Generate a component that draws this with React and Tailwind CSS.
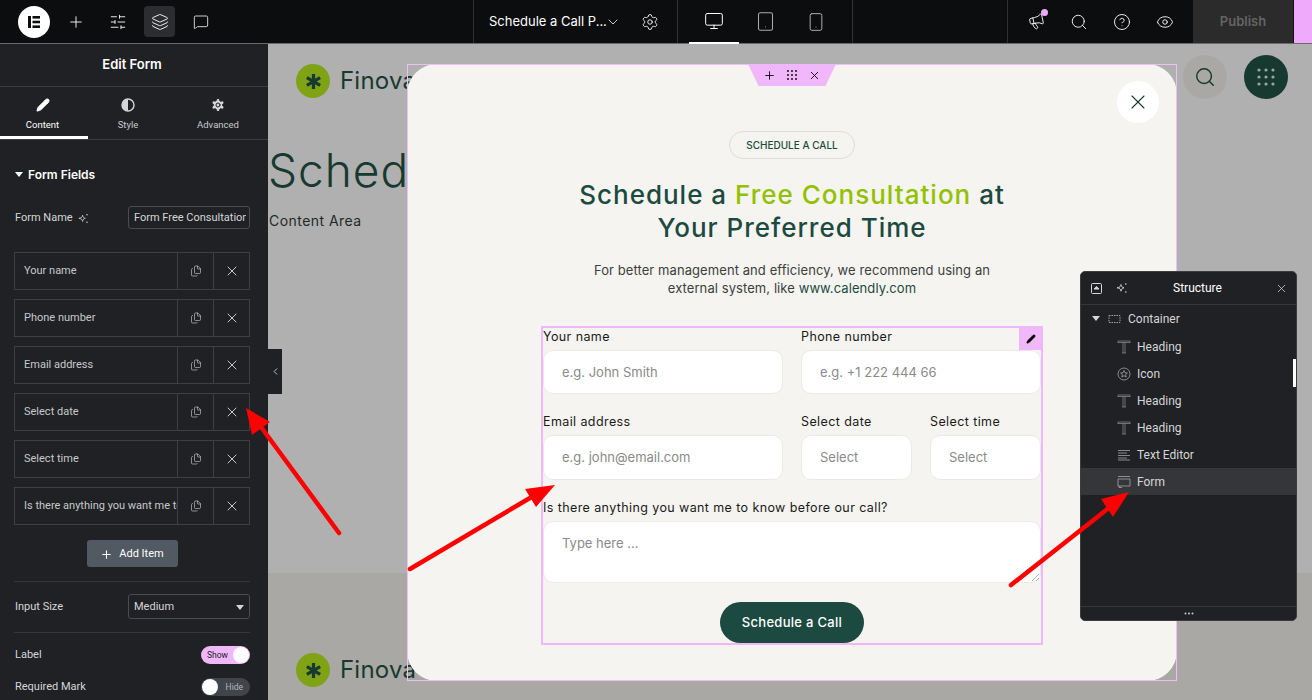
import React from "react";
import { Plus, SlidersHorizontal, Layers, MessageSquare, ChevronDown, Settings, Monitor, Tablet, Smartphone, Megaphone, Search, CircleHelp, Eye, X, Pencil, Files, ChevronLeft } from "lucide-react";

const Asterisk = ({ size = 20 }) => (
  <svg width={size} height={size} viewBox="0 0 20 20" fill="none" stroke="#17392f" strokeWidth="3.4">
    <path d="M10 2v16M3 6l14 8M17 6L3 14" />
  </svg>
);

const Spark = ({ size = 11, color = "#d5d6d8" }) => (
  <svg width={size} height={size} viewBox="0 0 12 12" fill="none" stroke={color} strokeWidth="0.9">
    <path d="M5 2.500C5.400 4.600 6 5.300 8 5.800 6 6.300 5.400 7 5 9.200 4.600 7 4 6.300 1 5.800 4 5.300 4.600 4.600 5 2.500z" />
    <circle cx="9.800" cy="2" r="0.8" fill={color} stroke="none" />
    <circle cx="9.800" cy="10" r="0.8" fill={color} stroke="none" />
  </svg>
);

const Dots = ({ n = 3, gap = 6, r = 1, color = "#fff", size = 16 }) => {
  const c = [];
  const s = (size - (n - 1) * gap) / 2;
  for (let i = 0; i < n; i++) for (let j = 0; j < n; j++) c.push(<circle key={i + "-" + j} cx={s + i * gap} cy={s + j * gap} r={r} fill={color} />);
  return <svg width={size} height={size}>{c}</svg>;
};

const ElementorLogo = () => (
  <div className="w-8 h-8 rounded-full bg-white flex items-center justify-center">
    <svg width="16" height="16" viewBox="0 0 16 16" fill="#0c0d0e">
      <rect x="2" y="2" width="3" height="12" />
      <rect x="6.5" y="2" width="7.5" height="2.6" />
      <rect x="6.5" y="6.7" width="7.5" height="2.6" />
      <rect x="6.5" y="11.4" width="7.5" height="2.6" />
    </svg>
  </div>
);

const TopBar = () => (
  <div className="h-[44px] shrink-0 bg-[#0c0d0e] border-b border-[#6b6b6b] flex text-white font-['Inter',sans-serif]">
    <div className="w-[473px] shrink-0 flex items-center pl-[18px]">
      <ElementorLogo />
      <Plus size={18} strokeWidth={1.2} className="ml-[17px]" />
      <SlidersHorizontal size={18} strokeWidth={1.2} className="ml-[24px]" />
      <div className="ml-[17px] w-[31px] h-[31px] rounded bg-[#2c2d30] flex items-center justify-center"><Layers size={18} strokeWidth={1.2} /></div>
      <MessageSquare size={16} strokeWidth={1.2} className="ml-[18px]" />
    </div>
    <div className="w-[204px] shrink-0 border-l border-[#303133] flex items-center pl-[15px]">
      <span className="text-[13px] w-[114px] whitespace-nowrap">Schedule a Call P...</span>
      <ChevronDown size={16} strokeWidth={1.2} className="ml-[2px]" />
      <Settings size={18} strokeWidth={1.2} className="ml-[20px]" />
    </div>
    <div className="w-[176px] shrink-0 border-x border-[#303133] flex pl-[11px]">
      <div className="w-[50px] h-[44px] border-b-2 border-white flex items-center justify-center"><Monitor size={20} strokeWidth={1.2} /></div>
      <div className="w-[52px] flex items-center justify-center text-[#a9aaac]"><Tablet size={21} strokeWidth={1.2} /></div>
      <div className="w-[50px] flex items-center justify-center text-[#a9aaac]"><Smartphone size={20} strokeWidth={1.2} /></div>
    </div>
    <div className="w-[154px] shrink-0" />
    <div className="w-[186px] shrink-0 border-l border-[#303133] flex items-center pl-[20px] gap-[25px]">
      <div className="relative">
        <Megaphone size={17} strokeWidth={1.2} className="-rotate-12" />
        <div className="absolute -top-[4px] -right-[3px] w-[7px] h-[7px] rounded-full bg-[#eeaafc]" />
      </div>
      <Search size={18} strokeWidth={1.2} />
      <CircleHelp size={18} strokeWidth={1.2} />
      <Eye size={18} strokeWidth={1.2} />
    </div>
    <div className="w-[100px] shrink-0 bg-[#2b2b2b] flex items-center justify-center text-[13px] font-semibold text-[#646464]">Publish</div>
    <div className="flex-1 bg-[#f0aafc] border-l border-[#111]" />
  </div>
);

const Row = ({ label }) => (
  <div className="h-[38px] flex border border-[#3d3f43] text-[11px] text-[#c8c9cb]">
    <div className="w-[162px] shrink-0 pl-[9px] pt-[1px] flex items-center overflow-hidden whitespace-nowrap">{label}</div>
    <div className="w-[36px] shrink-0 border-l border-[#3d3f43] flex items-center justify-center"><Files size={12} strokeWidth={1.3} /></div>
    <div className="flex-1 border-l border-[#3d3f43] flex items-center justify-center"><X size={16} strokeWidth={1.5} /></div>
  </div>
);

const Tab = ({ active, label, w, children }) => (
  <div className={"flex flex-col items-center pt-[9px] text-[9.5px] " + w + " " + (active ? "border-b-[3px] border-white text-white pr-[3px]" : "text-[#c8c9cb]")}>
    <div className="h-[18px] flex items-center">{children}</div>
    <div className="mt-[4px]">{label}</div>
  </div>
);

const Toggle = ({ on }) => on ? (
  <div className="w-[49px] h-[18px] rounded-full bg-[#f0b8fb] flex items-center justify-between text-[8.5px] text-[#222] pl-[6px]">
    <span>Show</span><div className="w-[16px] h-[16px] rounded-full bg-white mr-[1px]" />
  </div>
) : (
  <div className="w-[49px] h-[18px] rounded-full bg-[#40444b] flex items-center justify-between text-[8.5px] text-[#b5b7ba] pr-[7px]">
    <div className="w-[16px] h-[16px] rounded-full bg-white ml-[1px]" /><span>Hide</span>
  </div>
);

const LeftPanel = () => (
  <div className="w-[268px] h-full shrink-0 bg-[#1f2124] text-[#d5d6d8] font-['Roboto',sans-serif] overflow-hidden">
    <div className="h-[43px] border-b border-[#3a3c40] flex items-center justify-center pr-[4px] text-[13px] font-semibold text-white font-['Inter',sans-serif]">Edit Form</div>
    <div className="h-[53px] border-b border-[#3a3c40] flex">
      <Tab active w="w-[88px]" label="Content"><Pencil size={14} fill="#fff" className="text-white" /></Tab>
      <Tab w="w-[80px]" label="Style">
        <svg width="14" height="14" viewBox="0 0 14 14"><circle cx="7" cy="7" r="6" fill="none" stroke="#d5d6d8" strokeWidth="1.4" /><path d="M7 1a6 6 0 0 0 0 12z" fill="#d5d6d8" /></svg>
      </Tab>
      <Tab w="w-[100px]" label="Advanced"><Settings size={16} fill="#d5d6d8" strokeWidth={1.5} className="text-[#1f2124]" /></Tab>
    </div>
    <div className="pl-[14px] pr-[18px]">
      <div className="h-[66px] flex items-center pt-[3px] pl-[1px] text-[12px] font-semibold text-white font-['Inter',sans-serif]">
        <svg width="8" height="5" viewBox="0 0 8 5" className="mr-[5px]"><path d="M0 0h8L4 5z" fill="#fff" /></svg>Form Fields
      </div>
      <div className="flex items-center justify-between h-[23px] text-[11px]">
        <div className="flex items-center gap-[5px] pl-[1px] pt-[1px]">Form Name <Spark /></div>
        <div className="w-[122px] h-[23px] border border-[#4a4c50] rounded-[3px] pl-[5px] pt-[1px] flex items-center">
          <div className="w-[112px] overflow-hidden whitespace-nowrap">Form Free Consultation</div>
        </div>
      </div>
      <div className="mt-[23px] flex flex-col gap-[9px]">
        <Row label="Your name" />
        <Row label="Phone number" />
        <Row label="Email address" />
        <Row label="Select date" />
        <Row label="Select time" />
        <Row label="Is there anything you want me to know before our call?" />
      </div>
      <div className="mt-[15px] flex justify-center">
        <div className="w-[91px] h-[27px] rounded-[3px] bg-[#515962] text-white text-[11px] pt-[1px] flex items-center justify-center gap-[6px]"><Plus size={13} strokeWidth={2} />Add Item</div>
      </div>
      <div className="mt-[14px] border-t border-[#35373b]" />
      <div className="mt-[12px] flex items-center justify-between text-[11px] pl-[1px]">
        <span className="pt-[1px]">Input Size</span>
        <div className="w-[122px] h-[25px] border border-[#4a4c50] rounded-[3px] px-[5px] pt-[1px] flex items-center justify-between">Medium
          <svg width="8" height="5" viewBox="0 0 8 5"><path d="M0 0h8L4 5z" fill="#d5d6d8" /></svg>
        </div>
      </div>
      <div className="mt-[13px] border-t border-[#35373b]" />
      <div className="mt-[13px] flex items-center justify-between text-[11px] pl-[1px]"><span className="pt-[1px]">Label</span> <Toggle on /></div>
      <div className="mt-[14px] flex items-center justify-between text-[11px] pl-[1px]"><span className="pt-[1px]">Required Mark</span> <Toggle /></div>
    </div>
  </div>
);

const Brand = () => (
  <div className="flex items-center gap-[10px]">
    <div className="w-[34px] h-[34px] rounded-full bg-[#7fa315] flex items-center justify-center"><Asterisk size={19} /></div>
    <span className="text-[24px] text-[#17392f] font-['Inter',sans-serif] tracking-[0.2px]">Finova</span>
  </div>
);

const Input = ({ ph, className = "", h = "h-[44px]" }) => (
  <div className={"bg-white border border-[#ebeae6] rounded-[10px] pl-[18px] flex items-center text-[13px] text-[#8a8a8a] " + h + " " + className}>{ph}</div>
);

const Label = ({ children }) => <div className="text-[12.5px] text-[#1a1a1a] h-[22px] leading-[17px] tracking-[0.4px] whitespace-nowrap">{children}</div>;

const Modal = () => (
  <div className="absolute left-[139px] top-[20px] w-[770px] h-[617px] rounded-[30px] bg-[#f5f4f0] flex flex-col items-center font-['Inter',sans-serif]">
    <div className="absolute inset-0 border border-[#ecc0f5] pointer-events-none" />
    <div className="absolute left-[341px] top-0 w-[88px] h-[22px] bg-[#f0b8fb] [clip-path:polygon(0_0,100%_0,88%_100%,12%_100%)] flex items-center justify-center gap-[10px] text-black">
      <Plus size={13} strokeWidth={1.6} /><Dots n={3} gap={4} r={0.9} color="#000" size={12} /><X size={13} strokeWidth={1.6} />
    </div>
    <div className="absolute right-[18px] top-[17px] w-[42px] h-[42px] rounded-full bg-white flex items-center justify-center text-[#17392f]"><X size={24} strokeWidth={1.1} /></div>
    <div className="mt-[67px] h-[28px] w-[126px] rounded-full border border-[#dedcd6] flex items-center justify-center text-[10px] font-medium text-[#1c4a40] whitespace-nowrap">SCHEDULE A CALL</div>
    <div className="mt-[19px] text-[26px] leading-[33px] font-medium text-[#1c4a40] text-center tracking-[1px]">
      <div>Schedule a <span className="text-[#93c100]">Free Consultation</span> at</div>
      <div>Your Preferred Time</div>
    </div>
    <div className="mt-[17px] text-[13px] leading-[18px] text-[#3c3f3d] text-center tracking-[0.08px]">
      <div>For better management and efficiency, we recommend using an</div>
      <div>external system, like <span className="text-[#1c4a40]">www.calendly.com</span></div>
    </div>
    <div className="relative mt-[29px] w-[502px] h-[319px] border-2 border-[#f0b8fb] flex flex-col">
      <div className="absolute right-[-1px] top-[-1px] w-[23px] h-[23px] bg-[#f0b8fb] flex items-center justify-center">
        <Pencil size={10} fill="#000" strokeWidth={1.5} className="text-black" />
      </div>
      <div className="flex gap-[18px]">
        <div className="w-[240px]"><Label>Your name</Label><Input ph="e.g. John Smith" className="pt-[1px]" /></div>
        <div className="w-[240px]"><Label>Phone number</Label><Input ph="e.g. +1 222 444 66" className="pt-[1px]" /></div>
      </div>
      <div className="flex gap-[18px] mt-[19px]">
        <div className="w-[240px]"><Label>Email address</Label><Input ph="e.g. john@email.com" h="h-[45px]" /></div>
        <div className="w-[111px]"><Label>Select date</Label><Input ph="Select" h="h-[45px]" /></div>
        <div className="w-[111px]"><Label>Select time</Label><Input ph="Select" h="h-[45px]" /></div>
      </div>
      <div className="mt-[19px]">
        <Label>Is there anything you want me to know before our call?</Label>
        <div className="relative h-[62px] w-[498px] bg-white border border-[#ebeae6] rounded-[10px] pl-[18px] pt-[12px] text-[13px] leading-[18px] text-[#8a8a8a]">
          Type here ...
          <svg width="8" height="8" viewBox="0 0 8 8" className="absolute right-[1px] bottom-[1px]" stroke="#999" strokeWidth="0.8"><path d="M1 8l7-7M5 8l3-3" /></svg>
        </div>
      </div>
      <div className="mt-[19px] self-center w-[144px] h-[42px] rounded-full bg-[#1c4a40] text-white text-[13px] tracking-[0.3px] font-medium flex items-center justify-center">Schedule a Call</div>
    </div>
  </div>
);

const T = () => <svg width="14" height="14" viewBox="0 0 14 14" fill="none" stroke="#8f9093" strokeWidth="0.7"><path d="M1 3V1h12v2M1 2.500h12M6 2.500v10.500M8 2.500v10.500M5 13h4" /></svg>;
const SRow = ({ icon, label, active }) => (
  <div className={"h-[27px] pl-[36px] flex items-center gap-[6px] text-[12px] text-[#d5d6d8] " + (active ? "bg-[#35363a]" : "")}>
    <div className="w-[14px] flex justify-center">{icon}</div>{label}
  </div>
);

const Structure = () => (
  <div className="absolute left-[812px] top-[227px] w-[217px] h-[350px] rounded-[5px] bg-[#1f2124] border border-[#3a3c40] flex flex-col text-[#d5d6d8] font-['Roboto',sans-serif] overflow-hidden">
    <div className="relative h-[33px] shrink-0 border-b border-[#35373b] flex items-center px-[9px] gap-[13px]">
      <svg width="13" height="13" viewBox="0 0 13 13" fill="none" stroke="#d5d6d8"><rect x="1.5" y="1.5" width="10" height="10" rx="1" /><path d="M4 7l2.500-2.500L9 7z" fill="#d5d6d8" /></svg>
      <Spark size={12} />
      <span className="absolute left-[18px] right-0 top-[7px] text-center text-[12px] text-white">Structure</span>
      <X size={13} strokeWidth={1.4} className="absolute right-[8px]" />
    </div>
    <div className="relative flex-1 pt-[1px]">
      <div className="h-[27px] pl-[11px] pb-[2px] flex items-center text-[12px]">
        <svg width="8" height="5" viewBox="0 0 8 5" className="mr-[8px]"><path d="M0 0h8L4 5z" fill="#d5d6d8" /></svg>
        <svg width="13" height="10" viewBox="0 0 13 10" fill="none" stroke="#a5a6a8" strokeDasharray="1.5 1" className="mr-[7px]"><rect x="1" y="1.5" width="11" height="7" /></svg>
        Container
      </div>
      <SRow icon={<T />} label="Heading" />
      <SRow label="Icon" icon={<svg width="14" height="14" viewBox="0 0 14 14" fill="none" stroke="#a5a6a8" strokeWidth="0.8"><circle cx="7" cy="7" r="6" /><path d="M7 3.500l1 2.300 2.400.2-1.800 1.600.6 2.400L7 8.700 4.800 10l.6-2.400L3.600 6 6 5.800z" /></svg>} />
      <SRow icon={<T />} label="Heading" />
      <SRow icon={<T />} label="Heading" />
      <SRow label="Text Editor" icon={<svg width="14" height="12" viewBox="0 0 14 12" stroke="#a5a6a8" strokeWidth="0.8"><path d="M1 1.500h12M1 4h9M1 6.500h12M1 9h9M1 11h12" /></svg>} />
      <SRow active label="Form" icon={<svg width="14" height="14" viewBox="0 0 14 14" fill="none" stroke="#a5a6a8" strokeWidth="0.8"><path d="M1 1.500h12M1 4h12v7H1zM2 11v1.500h3" /></svg>} />
      <div className="absolute right-0 top-[54px] w-[3px] h-[28px] bg-white" />
    </div>
    <div className="h-[14px] shrink-0 border-t border-[#35373b] flex items-center justify-center">
      <svg width="10" height="3"><circle cx="1.500" cy="1.500" r="1" fill="#ccc" /><circle cx="5" cy="1.500" r="1" fill="#ccc" /><circle cx="8.500" cy="1.500" r="1" fill="#ccc" /></svg>
    </div>
  </div>
);

const Canvas = () => (
  <div className="relative flex-1 h-full bg-[#b0b0b0] overflow-hidden flex flex-col">
    <div className="absolute left-0 top-0 z-10 w-[14px] h-[45px] mt-[305px] bg-[#1f2124] flex items-center justify-center text-[#e0e0e0]"><ChevronLeft size={11} strokeWidth={1.8} /></div>
    <div className="h-[529px] shrink-0">
      <div className="flex items-start justify-between pt-[19px] pl-[28px] pr-[24px]">
        <Brand />
        <div className="flex gap-[17px] -mt-[8px]">
          <div className="w-[44px] h-[44px] rounded-full bg-[#a9a8a5] flex items-center justify-center text-[#17392f]"><Search size={22} strokeWidth={1.6} /></div>
          <div className="w-[44px] h-[44px] rounded-full bg-[#17392f] flex items-center justify-center"><Dots n={3} gap={7} r={1.6} color="#9aa8a2" size={20} /></div>
        </div>
      </div>
      <div className="mt-[43px] text-[46px] leading-[56px] font-light text-[#17392f] font-['Inter',sans-serif] tracking-[1px] whitespace-nowrap">Schedule a Call Page</div>
      <div className="pl-[1px] mt-[12px] text-[14px] text-[#1f2a27] tracking-[0.45px] font-['Inter',sans-serif]">Content Area</div>
    </div>
    <div className="flex-1 bg-[#a9a8a5] pl-[28px] pt-[79px]"><Brand /></div>
    <Modal />
    <Structure />
  </div>
);

const Arrows = () => (
  <svg className="absolute left-0 top-0 pointer-events-none z-20" width="1312" height="700" fill="#fe0000" stroke="#fe0000">
    <path d="M339 533L261 427" strokeWidth="4.500" strokeLinecap="round" />
    <path d="M246 408L270 422L252 435z" stroke="none" />
    <path d="M410 569L535 495" strokeWidth="4.500" strokeLinecap="round" />
    <path d="M555 485L536 507L525 489z" stroke="none" />
    <path d="M1011 585L1110 507" strokeWidth="4.500" strokeLinecap="round" />
    <path d="M1129 492L1101 499L1113 517z" stroke="none" />
  </svg>
);

export default function App() {
  return (
    <div className="relative w-[1312px] h-[700px] overflow-hidden flex flex-col">
      <TopBar />
      <div className="flex flex-1 min-h-0">
        <LeftPanel />
        <Canvas />
      </div>
      <Arrows />
    </div>
  );
}
